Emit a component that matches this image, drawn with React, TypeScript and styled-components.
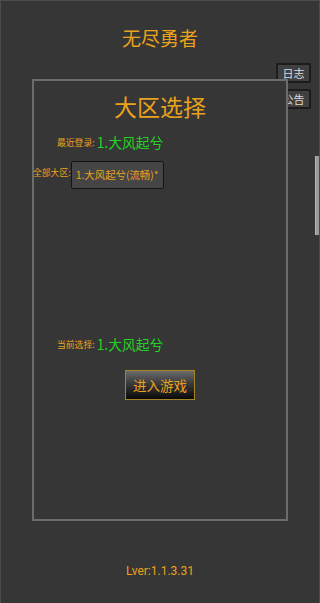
import React from "react";
import styled, { createGlobalStyle } from "styled-components";

const GlobalStyle = createGlobalStyle`
  html, body {
    margin: 0;
    padding: 0;
    background: #363636;
  }
  body {
    font-family: "Noto Sans CJK SC", "Noto Sans", Roboto, sans-serif;
  }
`;

const ORANGE = "#eaa21c";
const GREEN = "#22d422";

const Page = styled.div`
  position: relative;
  width: 320px;
  height: 603px;
  box-sizing: border-box;
  background: #363636;
  border-top: 1px solid #4c4c4c;
  border-left: 1px solid #4c4c4c;
  border-right: 1px solid #4c4c4c;
  display: flex;
  flex-direction: column;
  align-items: center;
  overflow: hidden;
`;

const GameTitle = styled.div`
  margin-top: 25px;
  height: 24px;
  line-height: 24px;
  font-size: 19px;
  color: ${ORANGE};
`;

const SideButtons = styled.div`
  position: absolute;
  top: 62px;
  right: 8px;
  display: flex;
  flex-direction: column;
  gap: 6px;
  z-index: 0;
`;

const SideButton = styled.div`
  width: 35px;
  height: 20px;
  box-sizing: border-box;
  border: 2px solid #1c1c1c;
  border-radius: 2px;
  background: #404040;
  color: #dcdcdc;
  font-size: 11px;
  line-height: 16px;
  text-align: center;
`;

const ScrollThumb = styled.div`
  position: absolute;
  right: 0;
  top: 155px;
  width: 3px;
  height: 79px;
  background: #9a9a9a;
  border-left: 1px solid #b8b8b8;
`;

const Panel = styled.div`
  position: relative;
  z-index: 1;
  margin-top: 29px;
  width: 256px;
  height: 442px;
  box-sizing: border-box;
  border: 2px solid #6c6c6c;
  background: #363636;
  display: flex;
  flex-direction: column;
`;

const PanelTitle = styled.div`
  margin-top: 11px;
  height: 28px;
  line-height: 28px;
  font-size: 23px;
  text-align: center;
  color: ${ORANGE};
`;

const Row = styled.div<{ $indent: number; $gap: number }>`
  margin-top: ${(p) => p.$gap}px;
  padding-left: ${(p) => p.$indent}px;
  display: flex;
  align-items: center;
  height: 20px;
`;

const DropRow = styled.div<{ $gap: number }>`
  margin-top: ${(p) => p.$gap}px;
  padding-left: 0;
  margin-left: -1px;
  display: flex;
  align-items: flex-start;
`;

const Label = styled.span<{ $top?: number; $space?: number }>`
  font-size: 8.8px;
  color: ${ORANGE};
  margin-right: ${(p) => p.$space ?? 2}px;
  margin-top: ${(p) => p.$top ?? 0}px;
  white-space: nowrap;
`;

const Zone = styled.span`
  font-size: 13.8px;
  color: ${GREEN};
  white-space: nowrap;
`;

const Dropdown = styled.div`
  width: 93px;
  height: 28px;
  box-sizing: border-box;
  border: 1px solid #141414;
  border-radius: 2px;
  background: #454545;
  color: ${ORANGE};
  font-size: 10.4px;
  line-height: 26px;
  text-align: center;
  white-space: nowrap;
`;

const EnterButton = styled.div`
  align-self: center;
  margin-top: 16px;
  width: 70px;
  height: 30px;
  box-sizing: border-box;
  border: 1px solid #a78522;
  background: linear-gradient(to bottom, #6a6a6a 0%, #3a3a3a 45%, #0a0a0a 100%);
  color: ${ORANGE};
  font-size: 13.5px;
  line-height: 28px;
  text-align: center;
`;

const Version = styled.div`
  margin-top: 42px;
  height: 16px;
  line-height: 16px;
  font-family: Roboto, "Noto Sans", sans-serif;
  font-size: 12px;
  color: ${ORANGE};
`;

export default function App() {
  return (
    <>
      <GlobalStyle />
      <Page>
        <GameTitle>无尽勇者</GameTitle>
        <SideButtons>
          <SideButton>日志</SideButton>
          <SideButton>公告</SideButton>
        </SideButtons>
        <ScrollThumb />
        <Panel>
          <PanelTitle>大区选择</PanelTitle>
          <Row $indent={23} $gap={12}>
            <Label>最近登录:</Label>
            <Zone>1.大风起兮</Zone>
          </Row>
          <DropRow $gap={9}>
            <Label $top={5} $space={0}>全部大区:</Label>
            <Dropdown>1.大风起兮(流畅)*</Dropdown>
          </DropRow>
          <Row $indent={23} $gap={145}>
            <Label>当前选择:</Label>
            <Zone>1.大风起兮</Zone>
          </Row>
          <EnterButton>进入游戏</EnterButton>
        </Panel>
        <Version>Lver:1.1.3.31</Version>
      </Page>
    </>
  );
}
